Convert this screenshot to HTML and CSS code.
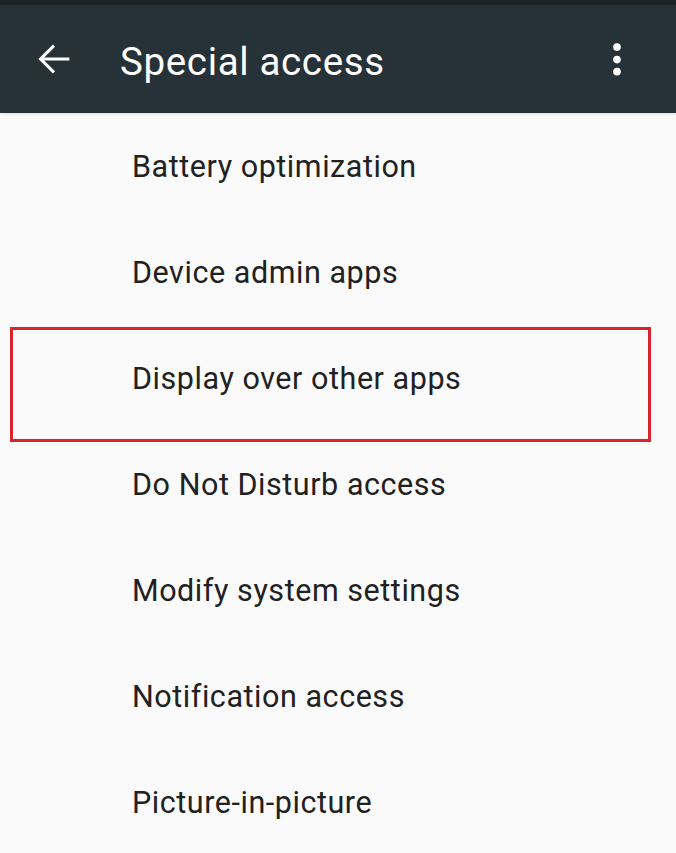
FILE: index.html
```html
<!DOCTYPE html>
<html>
<head>
<meta charset="utf-8">
<link rel="stylesheet" href="styles.css">
</head>
<body>
<div class="screen">
  <div class="status"></div>
  <header class="toolbar">
    <svg class="icon back" viewBox="0 0 24 24"><path d="M20 12H5M12 5l-7 7 7 7" fill="none" stroke="#fff" stroke-width="1.6"/></svg>
    <h1 class="title">Special access</h1>
    <svg class="icon more" viewBox="0 0 24 24" fill="#fff"><circle cx="12" cy="5.8" r="2"/><circle cx="12" cy="12.3" r="2"/><circle cx="12" cy="18.6" r="2"/></svg>
  </header>
  <ul class="list">
    <li class="item">Battery optimization</li>
    <li class="item">Device admin apps</li>
    <li class="item">Display over other apps</li>
    <li class="item">Do Not Disturb access</li>
    <li class="item">Modify system settings</li>
    <li class="item">Notification access</li>
    <li class="item">Picture-in-picture</li>
  </ul>
  <div class="highlight"></div>
</div>
</body>
</html>
```
FILE: styles.css
```css
html, body {
  margin: 0;
  padding: 0;
  background: #fafafa;
}
.screen {
  position: relative;
  width: 676px;
  height: 853px;
  overflow: hidden;
  background: #fafafa;
  font-family: Roboto, "Noto Sans", sans-serif;
}
.status {
  height: 5px;
  background: #1d2225;
}
.toolbar {
  height: 108px;
  background: #263238;
  display: flex;
  align-items: center;
  padding: 0 36px 0 31px;
  box-sizing: border-box;
  box-shadow: 0 1px 3px rgba(0,0,0,0.12);
  position: relative;
  z-index: 1;
}
.icon {
  width: 46px;
  height: 46px;
  flex: none;
}
.title {
  margin: 0 0 0 43px;
  flex: 1;
  color: #fff;
  font-weight: 400;
  font-size: 38.5px;
  letter-spacing: 0.65px;
  line-height: 1;
  position: relative;
  top: 3px;
}
.list {
  list-style: none;
  margin: 0;
  padding: 0;
}
.item {
  height: 106px;
  display: flex;
  align-items: center;
  padding-left: 132px;
  font-size: 30.5px;
  color: #212121;
  letter-spacing: 0.55px;
}
.highlight {
  position: absolute;
  left: 10px;
  top: 327px;
  width: 641px;
  height: 115px;
  box-sizing: border-box;
  border: 3px solid #d9232d;
}
```
